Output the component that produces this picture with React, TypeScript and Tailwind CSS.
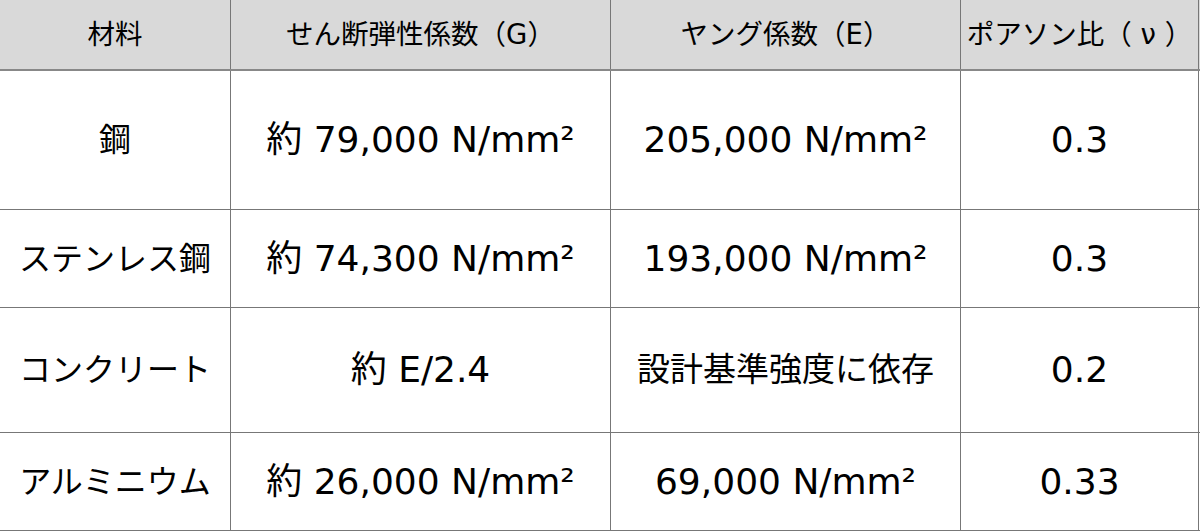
const FONT = "font-['DejaVu_Sans','Noto_Sans_CJK_JP',sans-serif]";

interface Row {
  material: string;
  shear: string;
  young: string;
  poisson: string;
  height: string;
}

const ROWS: Row[] = [
  { material: "鋼", shear: "約 79,000 N/mm²", young: "205,000 N/mm²", poisson: "0.3", height: "h-[139px]" },
  { material: "ステンレス鋼", shear: "約 74,300 N/mm²", young: "193,000 N/mm²", poisson: "0.3", height: "h-[98px]" },
  { material: "コンクリート", shear: "約 E/2.4", young: "設計基準強度に依存", poisson: "0.2", height: "h-[125px]" },
  { material: "アルミニウム", shear: "約 26,000 N/mm²", young: "69,000 N/mm²", poisson: "0.33", height: "h-[98px]" },
];

const COLS = "grid grid-cols-[231px_380px_350px_238px]";

function Cell({ children, className = "" }: { children: React.ReactNode; className?: string }) {
  return (
    <div className={`flex items-center justify-center border-r border-[#777] whitespace-nowrap ${className}`}>
      {children}
    </div>
  );
}

export default function App() {
  return (
    <div className={`w-[1200px] h-[531px] bg-white text-black overflow-hidden ${FONT}`}>
      <div className={`${COLS} h-[71px] bg-[#d9d9d9] border-b-2 border-[#888] text-[27.5px]`}>
        <Cell>材料</Cell>
        <Cell>せん断弾性係数（G）</Cell>
        <Cell>ヤング係数（E）</Cell>
        <Cell>ポアソン比（ ν ）</Cell>
      </div>
      {ROWS.map((row) => (
        <div key={row.material} className={`${COLS} ${row.height} border-b border-[#777]`}>
          <Cell className="text-[32px]">{row.material}</Cell>
          <Cell className="text-[36px]">{row.shear}</Cell>
          <Cell className={row.young.startsWith("設") ? "text-[33px]" : "text-[36px]"}>{row.young}</Cell>
          <Cell className="text-[36px]">{row.poisson}</Cell>
        </div>
      ))}
    </div>
  );
}
